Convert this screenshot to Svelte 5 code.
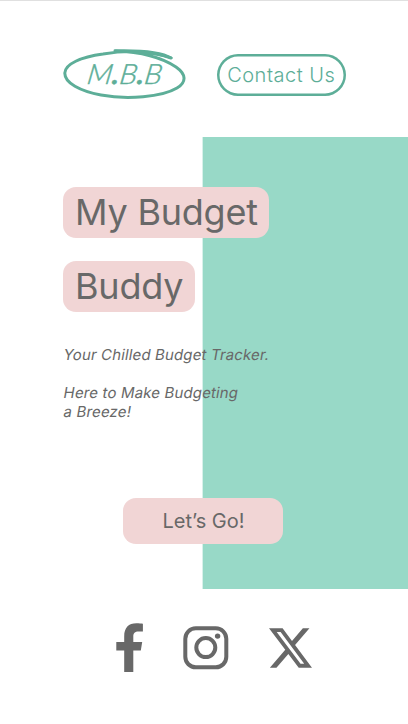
<script>
  const tagline = [['Your Chilled Budget Tracker.'], ['Here to Make Budgeting', 'a Breeze!']];
</script>

<div class="page">
  <header>
    <a class="logo" href="#home" aria-label="M.B.B">
      <svg width="124" height="52" viewBox="62 48 124 52">
        <g fill="none" stroke="#5dae98" stroke-linecap="round" stroke-linejoin="round">
          <path stroke-width="3" d="M171 58C151 51 126 50 103 54C81 57 65 64 64.800 73C64.600 83 80 91 101 95C127 100 162 97 177 88C187 82 186 74 176 67C161 57 140 52 115 50.800" />
          <path stroke-width="2.200" d="M116 50.500C138 50 162 52 171.500 58C160 54.500 149 53 139 52.500" />
        </g>
        <text x="0" y="0" transform="translate(86 83.500) skewX(-9)" textLength="75" lengthAdjust="spacingAndGlyphs">M<tspan class="dot">.</tspan>B<tspan class="dot">.</tspan>B</text>
      </svg>
    </a>
    <a class="contact" href="#contact"><span>Contact Us</span></a>
  </header>

  <main>
    <h1>
      <span class="my">My Budget</span>
      <span class="buddy">Buddy</span>
    </h1>
    <div class="copy">
      {#each tagline as lines}
        <p>
          {#each lines as line}<span>{line}</span>{/each}
        </p>
      {/each}
    </div>
    <button>Let’s Go!</button>
  </main>

  <footer>
    <a href="#facebook" aria-label="Facebook">
      <svg width="28" height="50" viewBox="0 0 28 50"><path fill="#686868" d="M8.200 49V27.600H.300V18.900H8.200V13.500C8.200 4.700 12.500 .300 20.500 .300C23.100 .300 25.200 .500 26.900 .800V8.400H22.700C18.800 8.400 17.300 10 17.300 13.400V18.900H26.200L24.800 27.600H17.300V49Z" /></svg>
    </a>
    <a href="#instagram" aria-label="Instagram">
      <svg width="46" height="44" viewBox="0 0 46 44">
        <g fill="none" stroke="#686868" stroke-width="4">
          <rect x="2.300" y="2.300" width="41" height="39" rx="10.500" />
          <circle cx="22.800" cy="21.600" r="9.500" />
        </g>
        <circle cx="34.600" cy="10.100" r="2.700" fill="#686868" />
      </svg>
    </a>
    <a href="#x" aria-label="X">
      <svg width="43" height="40" viewBox="0 0 24 22" preserveAspectRatio="none"><path fill="#686868" transform="translate(0 -1)" d="M18.901 1.153h3.680l-8.040 9.190L24 22.846h-7.406l-5.800-7.584-6.638 7.584H.474l8.600-9.830L0 1.154h7.594l5.243 6.932ZM17.610 20.644h2.039L6.486 3.240H4.298Z" /></svg>
    </a>
  </footer>
</div>

<style>
  :global(body) { margin: 0; background: #fff; }
  .page {
    box-sizing: border-box;
    width: 408px;
    height: 724px;
    border-top: 1px solid #e0e0e0;
    font-family: Inter, "Liberation Sans", sans-serif;
    color: #686868;
    overflow: hidden;
  }
  a { color: inherit; text-decoration: none; }
  svg { display: block; }
  header {
    box-sizing: border-box;
    height: 136px;
    padding: 47px 62px 0;
    display: flex;
    align-items: flex-start;
    justify-content: space-between;
  }
  .logo text {
    font-family: Lato, sans-serif;
    font-size: 28px;
    font-style: italic;
    font-weight: 300;
    fill: #5dae98;
    stroke: #5dae98;
    stroke-width: .4px;
  }
  .logo .dot { font-weight: 700; }
  .contact {
    box-sizing: border-box;
    width: 129.500px;
    height: 42px;
    margin-top: 6px;
    box-shadow: inset 0 0 0 2.500px #5dae98;
    border-radius: 21px;
    display: flex;
    align-items: center;
    justify-content: center;
    color: #5dae98;
    font-size: 20px;
    font-weight: 300;
    letter-spacing: .5px;
    white-space: nowrap;
  }
  main {
    box-sizing: border-box;
    height: 451.500px;
    padding: 50px 63px 0;
    background: linear-gradient(90deg, transparent 202.200px, #98d9c7 203px);
  }
  h1 {
    margin: 0;
    display: flex;
    flex-direction: column;
    align-items: flex-start;
    gap: 23px;
    font-size: 36px;
    font-weight: 400;
    letter-spacing: -.22px;
    line-height: 51px;
  }
  h1 span {
    box-sizing: border-box;
    height: 51px;
    padding-left: 12px;
    border-radius: 13px;
    background: #f1d5d5;
    white-space: nowrap;
  }
  .my { width: 206px; }
  .buddy { width: 132px; }
  .copy {
    width: 208px;
    margin-top: 33px;
    display: flex;
    flex-direction: column;
    gap: 19px;
    font-size: 15px;
    letter-spacing: .14px;
    line-height: 19px;
  }
  p { margin: 0; }
  p span {
    display: block;
    width: max-content;
    transform: skewX(-10deg);
    transform-origin: 0 75%;
  }
  button {
    display: block;
    width: 160px;
    height: 46px;
    margin: 77px 0 0 60px;
    padding: 0 0 0 1px;
    border: 0;
    border-radius: 13px;
    background: #f1d5d5;
    color: inherit;
    font: 400 20px/46px Inter, sans-serif;
  }
  footer {
    display: flex;
    align-items: center;
    gap: 39.500px;
    padding: 34px 0 0 115.500px;
  }
</style>
